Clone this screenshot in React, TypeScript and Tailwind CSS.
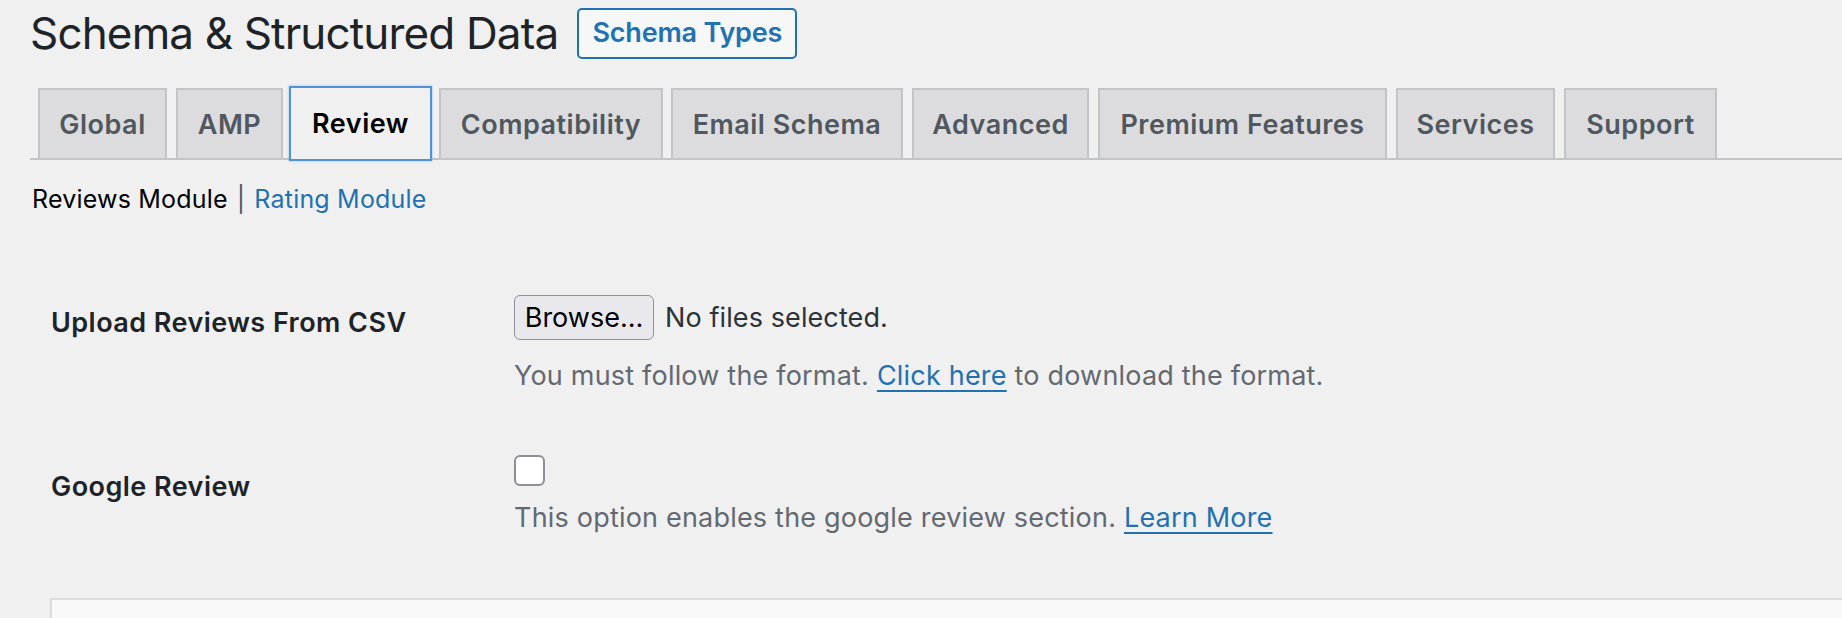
import React from "react";

type Tab = { label: string; width: string; gap: string; active?: boolean };

const TABS: Tab[] = [
  { label: "Global", width: "w-[129px]", gap: "ml-[8px]" },
  { label: "AMP", width: "w-[107px]", gap: "ml-[9px]" },
  { label: "Review", width: "w-[143px]", gap: "ml-[6px]", active: true },
  { label: "Compatibility", width: "w-[224px]", gap: "ml-[7px]" },
  { label: "Email Schema", width: "w-[232px]", gap: "ml-[8px]" },
  { label: "Advanced", width: "w-[177px]", gap: "ml-[9px]" },
  { label: "Premium Features", width: "w-[289px]", gap: "ml-[9px]" },
  { label: "Services", width: "w-[159px]", gap: "ml-[9px]" },
  { label: "Support", width: "w-[153px]", gap: "ml-[9px]" },
];

function NavTab({ tab }: { tab: Tab }) {
  if (tab.active) {
    return (
      <a
        href="#"
        className={`${tab.width} ${tab.gap} relative z-10 -mt-[2px] -mb-[3px] flex h-[75px] items-center justify-center border-2 border-[#4f94d4] bg-[#f0f0f1] pt-[2px] text-[27px] font-semibold tracking-[0.5px] text-black shadow-[0_0_2px_rgba(79,148,212,0.6)]`}
      >
        {tab.label}
      </a>
    );
  }
  return (
    <a
      href="#"
      className={`${tab.width} ${tab.gap} flex h-[70px] items-center justify-center border-2 border-b-0 border-[#c3c4c7] bg-[#dcdcde] pt-[2px] text-[27px] font-semibold tracking-[0.5px] text-[#50575e]`}
    >
      {tab.label}
    </a>
  );
}

export default function App() {
  return (
    <div className="h-[618px] overflow-hidden bg-[#f0f0f1] pl-[30px] font-['Inter','Noto_Sans',sans-serif] text-[#1d2327]">
      <div className="flex items-center pt-[8px]">
        <h1 className="text-[44px] leading-[51px] font-normal tracking-[-0.85px]">
          Schema &amp; Structured Data
        </h1>
        <a
          href="#"
          className="ml-[19px] flex h-[51px] w-[220px] items-center justify-center rounded-[5px] border-2 border-[#2271b1] bg-[#f6f7f7] text-[27px] font-semibold tracking-[-0.2px] text-[#2271b1]"
        >
          Schema Types
        </a>
      </div>

      <nav className="mt-[29px] flex items-start border-b-2 border-[#c3c4c7]">
        {TABS.map((t) => (
          <NavTab key={t.label} tab={t} />
        ))}
      </nav>

      <div className="mt-[21px] pl-[2px] text-[25px] leading-[36px] tracking-[0.2px]">
        <span className="text-black">Reviews Module</span>
        <span className="mx-[9px] text-[#50575e]">|</span>
        <a href="#" className="text-[#2271b1]">
          Rating Module
        </a>
      </div>

      <div className="mt-[78px] pl-[21px]">
        <div className="flex">
          <div className="mt-[10px] w-[463px] shrink-0 text-[27px] leading-[36px] font-semibold tracking-[0.45px]">
            Upload Reviews From CSV
          </div>
          <div className="flex flex-col">
            <div className="flex items-center">
              <button
                type="button"
                className="h-[45px] w-[140px] rounded-[6px] border-[1.5px] border-[#8f8f9d] bg-[#e9e9ed] text-[27px] leading-[36px] text-black"
              >
                Browse…
              </button>
              <span className="ml-[11px] text-[27px] leading-[36px] tracking-[0.1px] text-[#2c3338]">
                No files selected.
              </span>
            </div>
            <p className="mt-[18px] text-[27px] leading-[36px] tracking-[0.2px] text-[#646970]">
              You must follow the format.{" "}
              <a
                href="#"
                className="text-[#2271b1] underline decoration-2 underline-offset-[5px]"
              >
                Click here
              </a>{" "}
              to download the format.
            </p>
          </div>
        </div>

        <div className="mt-[61px] flex">
          <div className="mt-[14px] w-[463px] shrink-0 text-[27px] leading-[36px] font-semibold tracking-[0.45px]">
            Google Review
          </div>
          <div className="flex flex-col">
            <input
              type="checkbox"
              className="h-[31px] w-[31px] appearance-none rounded-[6px] border-2 border-[#8c8f94] bg-white"
            />
            <p className="mt-[14px] text-[27px] leading-[36px] tracking-[0.2px] text-[#646970]">
              This option enables the google review section.{" "}
              <a
                href="#"
                className="text-[#2271b1] underline decoration-2 underline-offset-[5px]"
              >
                Learn More
              </a>
            </p>
          </div>
        </div>

        <div className="mt-[62px] -ml-px h-[120px] border-2 border-r-0 border-[#dcdcde] bg-[#f9f9f9]" />
      </div>
    </div>
  );
}
